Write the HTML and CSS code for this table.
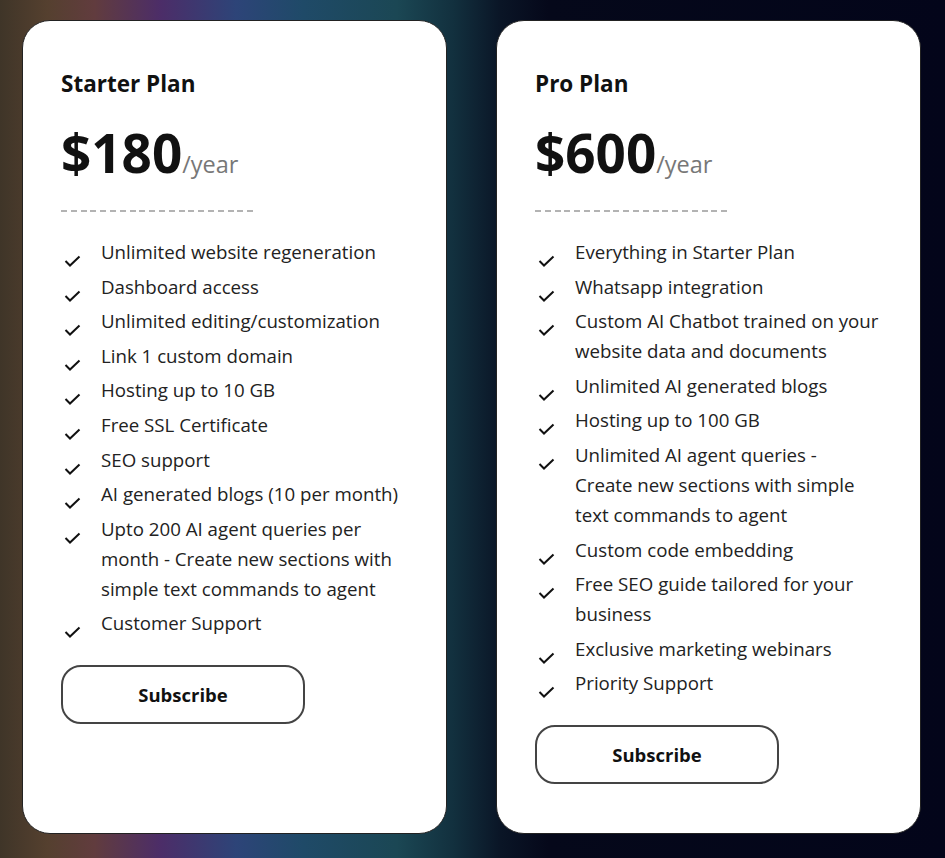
FILE: index.html
```html
<!DOCTYPE html>
<html lang="en">
<head>
    <meta charset="UTF-8">
    <meta name="viewport" content="width=device-width, initial-scale=1.0">
    <title>Pricing Plans</title>
    <link rel="stylesheet" href="styles.css">
</head>
<body>

    <div class="plans">
        <div class="card">
            <h2 class="plan-name">Starter Plan</h2>
            <div class="price"><span class="amount">$180</span><span class="period">/year</span></div>
            <div class="divider"></div>
            <ul class="features">
                <li><svg class="check" viewBox="0 0 17 12"><polyline points="1.5,6 6,10.5 15.5,1.5"/></svg><span>Unlimited website regeneration</span></li>
                <li><svg class="check" viewBox="0 0 17 12"><polyline points="1.5,6 6,10.5 15.5,1.5"/></svg><span>Dashboard access</span></li>
                <li><svg class="check" viewBox="0 0 17 12"><polyline points="1.5,6 6,10.5 15.5,1.5"/></svg><span>Unlimited editing/customization</span></li>
                <li><svg class="check" viewBox="0 0 17 12"><polyline points="1.5,6 6,10.5 15.5,1.5"/></svg><span>Link 1 custom domain</span></li>
                <li><svg class="check" viewBox="0 0 17 12"><polyline points="1.5,6 6,10.5 15.5,1.5"/></svg><span>Hosting up to 10 GB</span></li>
                <li><svg class="check" viewBox="0 0 17 12"><polyline points="1.5,6 6,10.5 15.5,1.5"/></svg><span>Free SSL Certificate</span></li>
                <li><svg class="check" viewBox="0 0 17 12"><polyline points="1.5,6 6,10.5 15.5,1.5"/></svg><span>SEO support</span></li>
                <li><svg class="check" viewBox="0 0 17 12"><polyline points="1.5,6 6,10.5 15.5,1.5"/></svg><span>AI generated blogs (10 per month)</span></li>
                <li><svg class="check" viewBox="0 0 17 12"><polyline points="1.5,6 6,10.5 15.5,1.5"/></svg><span>Upto 200 AI agent queries per month - Create new sections with simple text commands to agent</span></li>
                <li><svg class="check" viewBox="0 0 17 12"><polyline points="1.5,6 6,10.5 15.5,1.5"/></svg><span>Customer Support</span></li>
            </ul>
            <button class="subscribe">Subscribe</button>
        </div>

        <div class="card">
            <h2 class="plan-name">Pro Plan</h2>
            <div class="price"><span class="amount">$600</span><span class="period">/year</span></div>
            <div class="divider"></div>
            <ul class="features">
                <li><svg class="check" viewBox="0 0 17 12"><polyline points="1.5,6 6,10.5 15.5,1.5"/></svg><span>Everything in Starter Plan</span></li>
                <li><svg class="check" viewBox="0 0 17 12"><polyline points="1.5,6 6,10.5 15.5,1.5"/></svg><span>Whatsapp integration</span></li>
                <li><svg class="check" viewBox="0 0 17 12"><polyline points="1.5,6 6,10.5 15.5,1.5"/></svg><span>Custom AI Chatbot trained on your website data and documents</span></li>
                <li><svg class="check" viewBox="0 0 17 12"><polyline points="1.5,6 6,10.5 15.5,1.5"/></svg><span>Unlimited AI generated blogs</span></li>
                <li><svg class="check" viewBox="0 0 17 12"><polyline points="1.5,6 6,10.5 15.5,1.5"/></svg><span>Hosting up to 100 GB</span></li>
                <li><svg class="check" viewBox="0 0 17 12"><polyline points="1.5,6 6,10.5 15.5,1.5"/></svg><span>Unlimited AI agent queries -<br>Create new sections with simple text commands to agent</span></li>
                <li><svg class="check" viewBox="0 0 17 12"><polyline points="1.5,6 6,10.5 15.5,1.5"/></svg><span>Custom code embedding</span></li>
                <li><svg class="check" viewBox="0 0 17 12"><polyline points="1.5,6 6,10.5 15.5,1.5"/></svg><span>Free SEO guide tailored for your business</span></li>
                <li><svg class="check" viewBox="0 0 17 12"><polyline points="1.5,6 6,10.5 15.5,1.5"/></svg><span>Exclusive marketing webinars</span></li>
                <li><svg class="check" viewBox="0 0 17 12"><polyline points="1.5,6 6,10.5 15.5,1.5"/></svg><span>Priority Support</span></li>
            </ul>
            <button class="subscribe">Subscribe</button>
        </div>
    </div>

</body>
</html>
```

FILE: styles.css
```css
body {
    margin: 0;
    font-family: "Open Sans", Arial, sans-serif;
    color: #1a1a1a;
    background: linear-gradient(to right, #3f3528 0%, #55402f 5%, #613c3e 10%, #4c2d68 17%, #2d4478 25%, #1f4a68 32%, #1b4754 42%, #12303e 48%, #0a1526 53%, #05081a 58%, #03051a 100%);
    min-height: 858px;
}

.plans {
    display: flex;
    gap: 49px;
    padding: 20px 24px 24px 22px;
}

.card {
    flex: none;
    width: 425px;
    background-color: white;
    border: 1px solid #222;
    border-radius: 28px;
    padding: 48px 40px 40px 38px;
    height: 814px;
    box-sizing: border-box;
}

.plan-name {
    margin: 0;
    font-size: 22.5px;
    font-weight: 700;
    line-height: 30px;
    color: #111;
}

.price {
    margin-top: 21px;
    line-height: 66px;
}

.amount {
    font-size: 53px;
    font-weight: 700;
    color: #111;
}

.period {
    font-size: 23.5px;
    color: #777;
}

.divider {
    margin-top: 10px;
    width: 196px;
    height: 2px;
    background-image: repeating-linear-gradient(to right, #b3b3b3 0, #b3b3b3 6px, transparent 6px, transparent 9.8px);
}

.features {
    list-style: none;
    margin: 25px 0 0 0;
    padding: 0;
}

.features li {
    display: flex;
    align-items: flex-start;
    font-size: 18.7px;
    line-height: 30px;
    color: #222;
    margin-bottom: 4.6px;
}

.check {
    flex: none;
    width: 17px;
    height: 12px;
    margin: 18px 20px 0 3px;
}

.check polyline {
    fill: none;
    stroke: #111;
    stroke-width: 2;
}

.subscribe {
    margin-top: 22px;
    width: 244px;
    height: 59px;
    background: white;
    border: 2px solid #444;
    border-radius: 20px;
    font-family: "Open Sans", Arial, sans-serif;
    font-size: 18.5px;
    font-weight: 700;
    color: #111;
    cursor: pointer;
}
```
